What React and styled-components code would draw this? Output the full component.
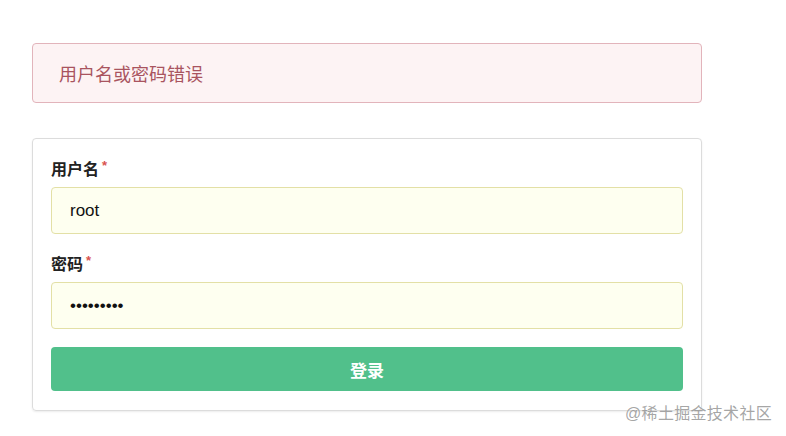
import React from "react"
import styled, { createGlobalStyle } from "styled-components"

const GlobalStyle = createGlobalStyle`
	body {
		margin: 0;
		background: #fff;
		font-family: "Liberation Sans", Arial, "Noto Sans CJK SC", sans-serif;
	}
`;

const Page = styled.div`
	width: 786px;
	height: 436px;
	padding: 43px 0 0 32px;
	box-sizing: border-box;
	position: relative;
	overflow: hidden;
`;

const Alert = styled.div`
	width: 670px;
	height: 60px;
	box-sizing: border-box;
	display: flex;
	align-items: center;
	padding-left: 26px;
	background: #fdf3f4;
	border: 1px solid #e2b4bb;
	border-radius: 4px;
	color: #a9545f;
	font-size: 18px;
`;

const Card = styled.form`
	margin-top: 35px;
	width: 670px;
	box-sizing: border-box;
	padding: 20px 18px 19px;
	border: 1px solid #dcdcdc;
	border-radius: 4px;
	box-shadow: 0 1px 2px rgba(0, 0, 0, 0.08);
	display: flex;
	flex-direction: column;
`;

const Field = styled.div`
	display: flex;
	flex-direction: column;
	margin-bottom: 18px;

	& + & {
		margin-top: 2px;
	}
`;

const Label = styled.label`
	font-size: 16px;
	font-weight: bold;
	color: #222;
	line-height: 22px;
	margin-bottom: 5px;

	span {
		color: #d9534f;
		font-size: 13px;
		position: relative;
		top: -5px;
		margin-left: 3px;
	}
`;

const Input = styled.input`
	height: 47px;
	box-sizing: border-box;
	padding: 0 18px;
	background: #fefff0;
	border: 1px solid #e3e0a6;
	border-radius: 4px;
	font-family: inherit;
	font-size: 17px;
	color: #111;
	outline: none;
`;

const Submit = styled.button`
	height: 44px;
	border: none;
	border-radius: 4px;
	background: #51c08b;
	color: #fff;
	font-family: inherit;
	font-size: 17px;
	font-weight: bold;
	cursor: pointer;
`;

const Watermark = styled.div`
	position: absolute;
	right: 14px;
	top: 400px;
	font-size: 16px;
	color: rgba(150, 150, 150, 0.85);
	letter-spacing: 0.3px;
`;

const App = () => (
	<Page>
		<GlobalStyle />
		<Alert>用户名或密码错误</Alert>
		<Card onSubmit={e => e.preventDefault()}>
			<Field>
				<Label>用户名<span>*</span></Label>
				<Input type="text" defaultValue="root" />
			</Field>
			<Field>
				<Label>密码<span>*</span></Label>
				<Input type="password" defaultValue="123456789" />
			</Field>
			<Submit type="submit">登录</Submit>
		</Card>
		<Watermark>@稀土掘金技术社区</Watermark>
	</Page>
);

export default App;
